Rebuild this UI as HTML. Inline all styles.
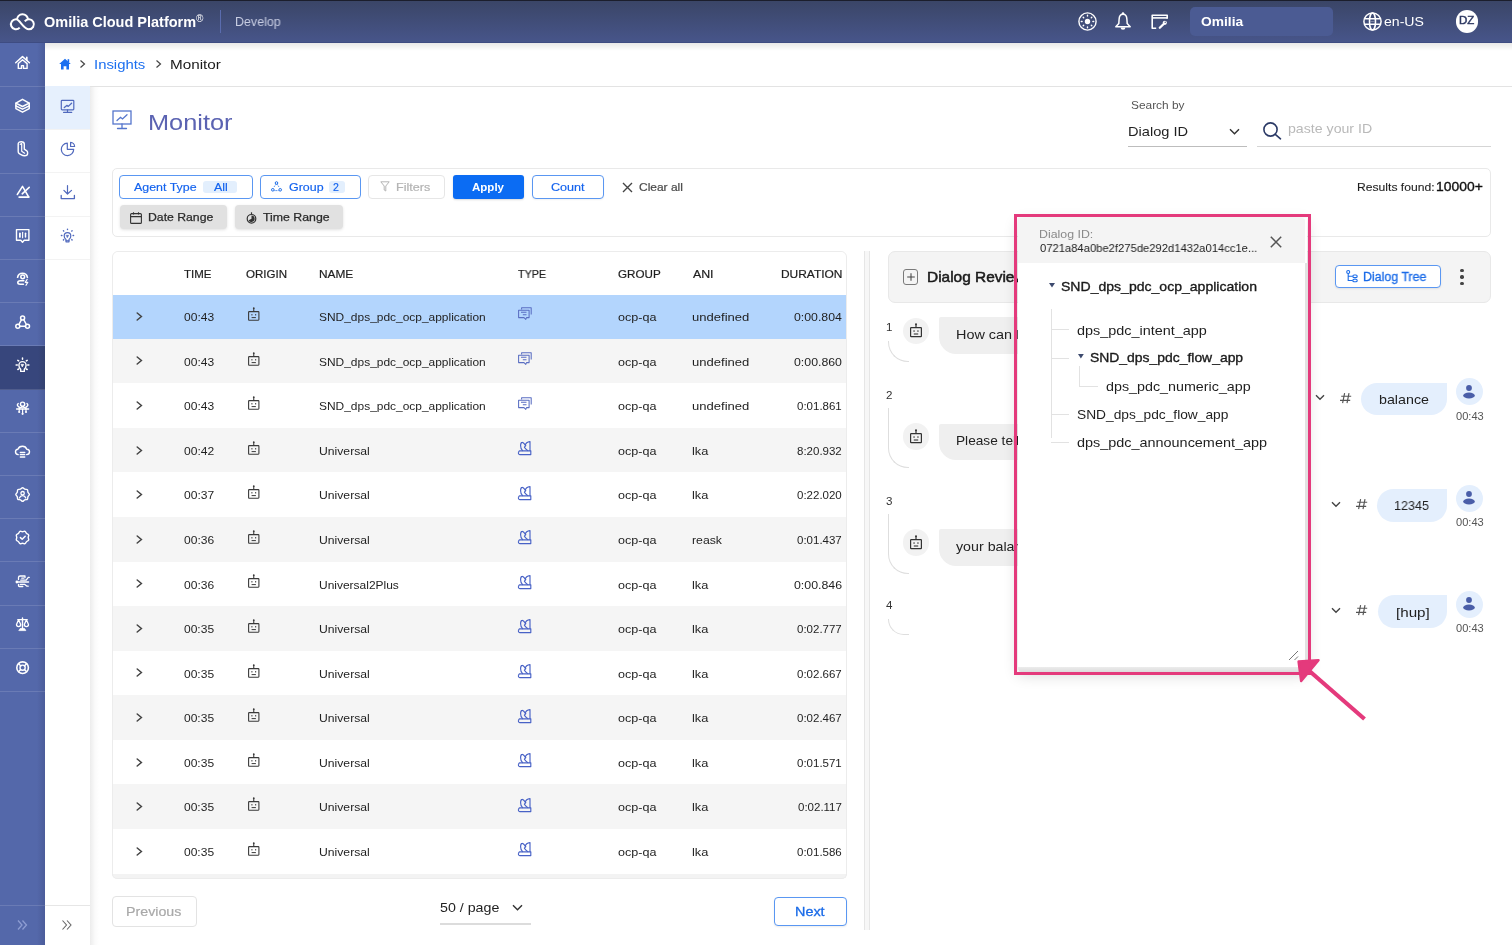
<!DOCTYPE html>
<html><head><meta charset="utf-8">
<style>
*{box-sizing:border-box;margin:0;padding:0}
html,body{width:1512px;height:945px;overflow:hidden;background:#fff;font-family:"Liberation Sans",sans-serif;color:#1f1f1f}
.a{position:absolute}
.t{position:absolute;white-space:nowrap;line-height:1;will-change:transform}
svg{position:absolute;overflow:visible}
</style></head><body>
<div class="a" style="left:0px;top:0px;width:1512px;height:42px;background:linear-gradient(#3a4566,#47558a)"></div>
<div class="a" style="left:0px;top:0px;width:1512px;height:1px;background:#1b1e2c"></div>
<div class="a" style="left:0px;top:42px;width:1512px;height:1px;background:#3e4c82"></div>
<svg style="left:0px;top:0px" width="45" height="42" viewBox="0 0 45 42" ><g fill="none" stroke="#fff" stroke-width="2" stroke-linecap="butt"><path d="M19.7 27.6 A5 5 0 1 1 16.2 19.3 C19.8 19.3 23.5 29.3 28.9 29.3 A5 5 0 1 0 24.8 21.4"/><path d="M17 19.8 A5.5 5.5 0 0 1 28 19.6"/></g></svg>
<span class="t" style="left:44.21px;top:15.01px;font-size:14.4px;font-weight:700;color:#fff;letter-spacing:0.000px;transform:scaleX(1.0064);transform-origin:0 0;">Omilia Cloud Platform</span>
<span class="t" style="left:196.35px;top:13.54px;font-size:10px;font-weight:400;color:#fff;letter-spacing:0.000px;">®</span>
<div class="a" style="left:220px;top:10px;width:1px;height:23px;background:#5a6cae"></div>
<span class="t" style="left:234.68px;top:15.53px;font-size:12.6px;font-weight:400;color:#c9cee3;letter-spacing:0.000px;transform:scaleX(0.9875);transform-origin:0 0;">Develop</span>
<svg style="left:1078px;top:12px" width="19" height="19" viewBox="0 0 19 19" ><g fill="none" stroke="#fff" stroke-width="1.4"><circle cx="9.5" cy="9.5" r="8.6"/></g><circle cx="9.5" cy="9.5" r="2.7" fill="#fff"/><g stroke="#fff" stroke-width="1.4" stroke-linecap="round"><path d="M9.5 3.3V4.1M9.5 14.9V15.7M3.3 9.5H4.1M14.9 9.5H15.7M5.2 5.2L5.7 5.7M13.3 13.3L13.8 13.8M5.2 13.8L5.7 13.3M13.3 5.7L13.8 5.2"/></g></svg>
<svg style="left:1114px;top:11px" width="18" height="21" viewBox="0 0 18 21" ><g fill="none" stroke="#fff" stroke-width="1.5" stroke-linejoin="round"><path d="M9 3.2C6.2 3.2 5.2 5.5 5.1 8.2 L4.8 12.6 L1.8 15.8 H16.2 L13.2 12.6 L12.9 8.2 C12.8 5.5 11.8 3.2 9 3.2Z"/></g><circle cx="9" cy="2.4" r="1.25" fill="#fff"/><path d="M6.6 16.4 A2.4 2.4 0 0 0 11.4 16.4Z" fill="#fff"/></svg>
<svg style="left:1151px;top:14px" width="18" height="16" viewBox="0 0 18 16" ><g fill="none" stroke="#fff" stroke-width="1.6" stroke-linejoin="round"><path d="M5.2 14.2 H1.2 V1.2 H16.2 V4.8"/><path d="M1.2 3.9 H16.2"/></g><g stroke="#fff" stroke-width="2.3" stroke-linecap="round"><path d="M8.8 13.8 L12.4 10.2"/></g><circle cx="13.8" cy="8.8" r="2.1" fill="#fff"/><circle cx="14.2" cy="8.3" r="0.7" fill="#3f4a73"/></svg>
<div class="a" style="left:1190px;top:7px;width:143px;height:29px;background:#4b5b93;border-radius:5px"></div>
<span class="t" style="left:1200.93px;top:15.14px;font-size:13.3px;font-weight:700;color:#fff;letter-spacing:0.000px;transform:scaleX(1.0374);transform-origin:0 0;">Omilia</span>
<svg style="left:1363px;top:12px" width="19" height="19" viewBox="0 0 19 19" ><g fill="none" stroke="#fff" stroke-width="1.5"><circle cx="9.5" cy="9.5" r="8.6"/><ellipse cx="9.5" cy="9.5" rx="3" ry="8.6"/><path d="M1.4 6.8H17.6M1.4 12.2H17.6"/></g><path d="M7.5 9.5H11.5" stroke="#fff" stroke-width="0.6" opacity=".5"/></svg>
<span class="t" style="left:1384.40px;top:15.14px;font-size:13.3px;font-weight:400;color:#fff;letter-spacing:0.000px;transform:scaleX(1.0595);transform-origin:0 0;">en-US</span>
<div class="a" style="left:1455.9px;top:10.4px;width:22.4px;height:22.4px;border-radius:50%;background:#fff"></div>
<span class="t" style="left:1459.06px;top:16.47px;font-size:10.2px;font-weight:400;color:#2f3a63;letter-spacing:0.000px;transform:scaleX(1.1256);transform-origin:0 0;-webkit-text-stroke:0.45px #2f3a63">DZ</span>
<div class="a" style="left:90px;top:43px;width:1422px;height:8px;background:linear-gradient(rgba(0,0,0,.09),rgba(0,0,0,0))"></div>
<div class="a" style="left:45px;top:43px;width:45px;height:8px;background:linear-gradient(rgba(0,0,0,.09),rgba(0,0,0,0))"></div>
<div class="a" style="left:0px;top:43px;width:45px;height:902px;background:linear-gradient(90deg,#5468aa 0,#5468aa 37px,#4b5c9a 45px)"></div>
<div class="a" style="left:0px;top:86.2px;width:45px;height:1px;background:rgba(255,255,255,.13)"></div>
<div class="a" style="left:0px;top:129.4px;width:45px;height:1px;background:rgba(255,255,255,.13)"></div>
<div class="a" style="left:0px;top:172.6px;width:45px;height:1px;background:rgba(255,255,255,.13)"></div>
<div class="a" style="left:0px;top:215.8px;width:45px;height:1px;background:rgba(255,255,255,.13)"></div>
<div class="a" style="left:0px;top:259.0px;width:45px;height:1px;background:rgba(255,255,255,.13)"></div>
<div class="a" style="left:0px;top:302.2px;width:45px;height:1px;background:rgba(255,255,255,.13)"></div>
<div class="a" style="left:0px;top:345.4px;width:45px;height:1px;background:rgba(255,255,255,.13)"></div>
<div class="a" style="left:0px;top:346.4px;width:45px;height:43.2px;background:linear-gradient(90deg,#37467c 0,#37467c 38px,#33416f 45px)"></div>
<div class="a" style="left:0px;top:388.6px;width:45px;height:1px;background:rgba(255,255,255,.13)"></div>
<div class="a" style="left:0px;top:431.8px;width:45px;height:1px;background:rgba(255,255,255,.13)"></div>
<div class="a" style="left:0px;top:475.0px;width:45px;height:1px;background:rgba(255,255,255,.13)"></div>
<div class="a" style="left:0px;top:518.2px;width:45px;height:1px;background:rgba(255,255,255,.13)"></div>
<div class="a" style="left:0px;top:561.4px;width:45px;height:1px;background:rgba(255,255,255,.13)"></div>
<div class="a" style="left:0px;top:604.6px;width:45px;height:1px;background:rgba(255,255,255,.13)"></div>
<div class="a" style="left:0px;top:647.8px;width:45px;height:1px;background:rgba(255,255,255,.13)"></div>
<div class="a" style="left:0px;top:691.0px;width:45px;height:1px;background:rgba(255,255,255,.13)"></div>
<div class="a" style="left:0px;top:905px;width:45px;height:1px;background:rgba(255,255,255,.13)"></div>
<svg style="left:16px;top:919px" width="12" height="12" viewBox="0 0 12 12" ><g fill="none" stroke="#8e9dd3" stroke-width="1.3"><path d="M2 1.5L6 6L2 10.5M6.5 1.5L10.5 6L6.5 10.5"/></g></svg>
<svg style="left:12px;top:54px" width="22" height="22" viewBox="0 0 22 22" ><g fill="none" stroke="#fff" stroke-linecap="round" stroke-linejoin="round"><path d="M3.7 8.8 L10.5 2.6 L17.4 8.8" stroke-width="1.5"/><path d="M14.8 3.4 V5.8" stroke-width="1.7"/><path d="M6.3 9.6 L10.5 5.8 L15.1 9.6 V14.4 H11.5 V11.6 H9.5 V14.4 H6.3 Z" stroke-width="1.4"/></g></svg>
<svg style="left:12px;top:97px" width="22" height="22" viewBox="0 0 22 22" ><g fill="none" stroke="#fff" stroke-linecap="round" stroke-linejoin="round"><g stroke-width="1.5"><path d="M10.5 2.3 L17.2 6.2 L10.5 9.5 L3.9 6.2 Z"/><path d="M3.9 6.2 V8.8 L10.5 12.2 L17.2 8.8 V6.2"/><path d="M3.9 8.8 V11.6 L10.5 15.2 L17.2 11.6 V8.8"/></g></g></svg>
<svg style="left:12px;top:138px" width="22" height="22" viewBox="0 0 22 22" ><g fill="none" stroke="#fff" stroke-linecap="round" stroke-linejoin="round"><path d="M6.2 5.8 C6.2 4.3 7.5 3.8 9.2 3.8 C10.8 3.8 12.3 4.5 12.3 6 V11.2 L14.8 12.8 C15.4 13.2 15.6 13.8 15.6 14.5 V15.6 C15.6 17 14.5 17.8 12.6 17.8 C11.2 17.8 10 17.2 8.5 16.3 L7 15.3 C6.4 14.9 6.2 14.2 6.2 13.4 Z" stroke-width="1.4"/><path d="M8.2 6.3 L9.7 5.6 V13.2 L12.6 15.2" stroke-width="1.2"/></g></svg>
<svg style="left:12px;top:181px" width="22" height="22" viewBox="0 0 22 22" ><g fill="none" stroke="#fff" stroke-linecap="round" stroke-linejoin="round"><path d="M5.3 13.5 L10.5 5.3 L16.7 16" stroke-width="1.5"/><path d="M10.2 12.8 L17.2 6.3" stroke-width="1.6"/><path d="M7.2 16.1 H16.7" stroke-width="1.9"/></g></svg>
<svg style="left:12px;top:224px" width="22" height="22" viewBox="0 0 22 22" ><g fill="none" stroke="#fff" stroke-linecap="round" stroke-linejoin="round"><path d="M4.5 5.6 H16.9 V16.2 H12.2 L10.5 18.3 L8.8 16.2 H4.5 Z" stroke-width="1.4"/><path d="M7.9 9.3 V12.9" stroke-width="1.8"/><path d="M10.6 8.3 V13.8" stroke-width="1.1"/><path d="M13.5 9.3 V12.9" stroke-width="1.5"/></g></svg>
<svg style="left:12px;top:267px" width="22" height="22" viewBox="0 0 22 22" ><g fill="none" stroke="#fff" stroke-linecap="round" stroke-linejoin="round"><path d="M5.6 10.3 A5 5 0 0 1 15.4 10.3" stroke-width="1.6"/><circle cx="10.7" cy="9.8" r="1.9" stroke-width="1.5"/><path d="M11.8 13.8 H8.2 C6.5 13.8 5.8 14.6 5.8 15.6 C5.8 16.6 6.6 17.3 8.2 17.3 H11.4" stroke-width="1.6"/><path d="M15.2 12.3 L13.3 15.3 H15.8 L14 18.3" stroke-width="1.2"/></g></svg>
<svg style="left:12px;top:310px" width="22" height="22" viewBox="0 0 22 22" ><g fill="none" stroke="#fff" stroke-linecap="round" stroke-linejoin="round"><g stroke-width="1.5"><circle cx="10.6" cy="7.9" r="2"/><circle cx="5.8" cy="16.3" r="2"/><circle cx="15.5" cy="16.3" r="2"/><path d="M9.5 9.6 L6.9 14.5 M11.7 9.6 L14.4 14.5 M7.8 16.3 H13.5"/></g></g></svg>
<svg style="left:12px;top:354px" width="22" height="22" viewBox="0 0 22 22" ><g fill="none" stroke="#fff" stroke-linecap="round" stroke-linejoin="round"><path d="M8.7 15.2 C7.5 14.2 6.9 12.8 6.9 11.2 A3.6 3.6 0 0 1 14.1 11.2 C14.1 12.8 13.5 14.2 12.3 15.2 V17.4 H8.7 Z" stroke-width="1.4"/><path d="M9.4 10.4 H11.6 L10.5 12.6 Z" fill="#fff" stroke-width="0.8"/><path d="M10.5 3.9 V5.3 M4.1 11 H5.3 M15.7 11 H16.9 M5.8 6.3 L6.7 6.9 M15.2 6.3 L14.3 6.9 M5.8 15.5 L6.7 15 M15.2 15.5 L14.3 15" stroke-width="1.5"/></g></svg>
<svg style="left:12px;top:397px" width="22" height="22" viewBox="0 0 22 22" ><g fill="none" stroke="#fff" stroke-linecap="round" stroke-linejoin="round"><g stroke-width="1.4"><circle cx="10.6" cy="7.2" r="2.1"/><path d="M7.2 11.8 C7.8 10.6 9 10.1 10.6 10.1 C12.2 10.1 13.4 10.6 14 11.8"/><path d="M6.2 6.6 C5 7.3 5.2 8.8 6.2 9.4 L7.4 10.4 M15 6.6 C16.2 7.3 16 8.8 15 9.4 L13.8 10.4"/><path d="M4.6 12 H16.6"/><path d="M7.2 12 V14.2 M10.6 12 V16 M14 12 V14.2" stroke-width="1.2"/></g><circle cx="7.2" cy="15" r="1.1" fill="#fff" stroke="none"/><circle cx="10.6" cy="16.8" r="1.1" fill="#fff" stroke="none"/><circle cx="14" cy="15" r="1.1" fill="#fff" stroke="none"/></g></svg>
<svg style="left:12px;top:440px" width="22" height="22" viewBox="0 0 22 22" ><g fill="none" stroke="#fff" stroke-linecap="round" stroke-linejoin="round"><path d="M6.2 14.6 C4.3 14.4 3.5 13.2 3.5 11.8 C3.5 10.3 4.6 9.3 5.9 9.2 C6.6 7.2 8.4 6.2 10.5 6.2 C12.6 6.2 14.2 7.4 14.8 9.2 C16.4 9.3 17.5 10.4 17.5 11.8 C17.5 13.3 16.4 14.6 14.6 14.6" stroke-width="1.4"/><path d="M8.3 12.5 H12.8 M8.3 14.7 H12.8 M8.3 17 H12.8" stroke-width="1.3"/></g></svg>
<svg style="left:12px;top:483px" width="22" height="22" viewBox="0 0 22 22" ><g fill="none" stroke="#fff" stroke-linecap="round" stroke-linejoin="round"><path d="M9.57 5.31 Q10.60 4.10 11.63 5.31 Q12.67 6.51 14.25 6.39 Q15.83 6.27 15.71 7.85 Q15.59 9.43 16.79 10.47 Q18.00 11.50 16.79 12.53 Q15.59 13.57 15.71 15.15 Q15.83 16.73 14.25 16.61 Q12.67 16.49 11.63 17.69 Q10.60 18.90 9.57 17.69 Q8.53 16.49 6.95 16.61 Q5.37 16.73 5.49 15.15 Q5.61 13.57 4.41 12.53 Q3.20 11.50 4.41 10.47 Q5.61 9.43 5.49 7.85 Q5.37 6.27 6.95 6.39 Q8.53 6.51 9.57 5.31 Z" stroke-width="1.4"/><circle cx="10.6" cy="10.2" r="1.7" stroke-width="1.3"/><path d="M7.4 15 C8 13.4 9.2 12.7 10.6 12.7 C12 12.7 13.2 13.4 13.8 15" stroke-width="1.3"/></g></svg>
<svg style="left:12px;top:526px" width="22" height="22" viewBox="0 0 22 22" ><g fill="none" stroke="#fff" stroke-linecap="round" stroke-linejoin="round"><path d="M11.88 5.47 Q13.26 4.85 13.79 6.26 Q14.32 7.68 15.74 8.21 Q17.15 8.74 16.53 10.12 Q15.90 11.50 16.53 12.88 Q17.15 14.26 15.74 14.79 Q14.32 15.32 13.79 16.74 Q13.26 18.15 11.88 17.53 Q10.50 16.90 9.12 17.53 Q7.74 18.15 7.21 16.74 Q6.68 15.32 5.26 14.79 Q3.85 14.26 4.47 12.88 Q5.10 11.50 4.47 10.12 Q3.85 8.74 5.26 8.21 Q6.68 7.68 7.21 6.26 Q7.74 4.85 9.12 5.47 Q10.50 6.10 11.88 5.47 Z" stroke-width="1.4"/><path d="M8.4 11.6 L10.2 13.2 L13.2 10.3" stroke-width="1.5"/></g></svg>
<svg style="left:12px;top:569px" width="22" height="22" viewBox="0 0 22 22" ><g fill="none" stroke="#fff" stroke-linecap="round" stroke-linejoin="round"><circle cx="4.9" cy="13" r="1.4" fill="#fff" stroke="none"/><path d="M4.9 13 H16.6" stroke-width="1.3"/><path d="M6.5 10.6 V8.4 C6.5 7.5 7.3 7 8.2 7 H13 V8.6 M8.8 11.2 H14.2 L16.3 8.4 H17.2 M9.8 9.2 H11.8" stroke-width="1.3"/><path d="M6.5 15.5 V16.8 C6.5 17.3 7 17.5 7.5 17.5 H10.8 M8.2 15.3 H12.5 L15 17.2 H16.2" stroke-width="1.3"/></g></svg>
<svg style="left:12px;top:612px" width="22" height="22" viewBox="0 0 22 22" ><g fill="none" stroke="#fff" stroke-linecap="round" stroke-linejoin="round"><path d="M10.5 6 V16.5 M5.8 7.6 H15.2" stroke-width="1.4"/><path d="M7.2 18.6 H13.8 L12.6 16.6 H8.4 Z" fill="#fff" stroke-width="0.8"/><path d="M6.6 7.8 L4.5 12.6 C4.5 14 5.4 14.7 6.6 14.7 C7.8 14.7 8.7 14 8.7 12.6 Z M14.4 7.8 L12.3 12.6 C12.3 14 13.2 14.7 14.4 14.7 C15.6 14.7 16.5 14 16.5 12.6 Z" stroke-width="1.3"/></g></svg>
<svg style="left:12px;top:655px" width="22" height="22" viewBox="0 0 22 22" ><g fill="none" stroke="#fff" stroke-linecap="round" stroke-linejoin="round"><circle cx="10.6" cy="12.7" r="5.8" stroke-width="1.6"/><circle cx="10.6" cy="12.7" r="2.6" stroke-width="1.4"/><path d="M6.5 8.6 L8.8 10.9 M14.7 8.6 L12.4 10.9 M6.5 16.8 L8.8 14.5 M14.7 16.8 L12.4 14.5" stroke-width="1.4"/></g></svg>
<div class="a" style="left:90px;top:86px;width:9px;height:859px;background:linear-gradient(90deg,rgba(0,0,0,.075),rgba(0,0,0,.02) 5px,rgba(0,0,0,0))"></div>
<div class="a" style="left:45px;top:86px;width:45px;height:43.4px;background:#e6f0fd"></div>
<div class="a" style="left:45px;top:129.2px;width:45px;height:1px;background:#f3f3f3"></div>
<div class="a" style="left:45px;top:172.4px;width:45px;height:1px;background:#f3f3f3"></div>
<div class="a" style="left:45px;top:215.6px;width:45px;height:1px;background:#f3f3f3"></div>
<div class="a" style="left:45px;top:258.8px;width:45px;height:1px;background:#f3f3f3"></div>
<div class="a" style="left:45px;top:905px;width:45px;height:1px;background:#e6e6e6"></div>
<svg style="left:61px;top:919px" width="12" height="12" viewBox="0 0 12 12" ><g fill="none" stroke="#666" stroke-width="1.1"><path d="M1.5 1.5L5.5 6L1.5 10.5M6 1.5L10 6L6 10.5"/></g></svg>
<svg style="left:56px;top:96px" width="24" height="24" viewBox="0 0 24 24" ><g fill="none" stroke="#5069bd" stroke-linecap="round" stroke-linejoin="round"><rect x="5.3" y="4.3" width="12.5" height="9.5" rx="0.8" stroke-width="1.2"/><path d="M11.5 13.8 V16.3 M7.6 16.4 H15.7" stroke-width="1.2"/><path d="M8.3 11.5 L10.8 9.4 L12.3 10.4 L15.6 7.3" stroke-width="1.3"/></g></svg>
<svg style="left:56px;top:138px" width="24" height="24" viewBox="0 0 24 24" ><g fill="none" stroke="#5069bd" stroke-linecap="round" stroke-linejoin="round"><path d="M11.3 5.2 A6.2 6.2 0 1 0 17.7 11.3 H11.3 Z" stroke-width="1.2"/><path d="M14.6 4.3 V8.5 H18.6 A4.2 4.2 0 0 0 14.6 4.3 Z" stroke-width="1.2"/></g></svg>
<svg style="left:56px;top:180px" width="24" height="24" viewBox="0 0 24 24" ><g fill="none" stroke="#5069bd" stroke-linecap="round" stroke-linejoin="round"><path d="M11.5 5.6 V14 M7.9 10.4 L11.5 14 L15.5 10.4" stroke-width="1.2"/><path d="M5.2 15.4 V18.6 H18.4 V15.4" stroke-width="1.3"/></g></svg>
<svg style="left:56px;top:223px" width="24" height="24" viewBox="0 0 24 24" ><g fill="none" stroke="#5069bd" stroke-linecap="round" stroke-linejoin="round"><path d="M10 16.6 C8.9 15.8 8.2 14.6 8.2 12.9 A3.3 3.3 0 0 1 14.8 12.9 C14.8 14.6 14.1 15.8 13 16.6 V18.8 H10 Z" stroke-width="1.2"/><path d="M10.4 12.3 H12.6 L11.5 14.4 Z" fill="#5069bd" stroke-width="0.6"/><path d="M10 17.6 H13" stroke-width="0.9"/><path d="M11.5 6.1 V6.6 M5.4 12.5 H5.9 M17.1 12.5 H17.6 M7.4 7.7 L7.7 8.1 M16.1 7.7 L15.8 8.1 M7.4 17 L7.7 16.6 M16.1 17 L15.8 16.6" stroke-width="1.4"/></g></svg>
<div class="a" style="left:90px;top:86px;width:1422px;height:1px;background:#e3e3e3"></div>
<svg style="left:59px;top:58px" width="12" height="12" viewBox="0 0 12 12" ><path d="M6 0.8 L11.8 6 H10 V11.5 H7.4 V8.2 H4.6 V11.5 H2 V6 H0.2 Z" fill="#1a6ff0"/><rect x="8.6" y="1.2" width="1.6" height="3" fill="#1a6ff0"/></svg>
<svg style="left:79px;top:59px" width="8" height="10" viewBox="0 0 8 10" ><path d="M1.5 1.5 L5.5 5 L1.5 8.5" fill="none" stroke="#444" stroke-width="1.2"/></svg>
<span class="t" style="left:94.43px;top:58.07px;font-size:13.5px;font-weight:400;color:#1b6ff0;letter-spacing:0.000px;transform:scaleX(1.1027);transform-origin:0 0;">Insights</span>
<svg style="left:155px;top:59px" width="8" height="10" viewBox="0 0 8 10" ><path d="M1.5 1.5 L5.5 5 L1.5 8.5" fill="none" stroke="#444" stroke-width="1.2"/></svg>
<span class="t" style="left:170.15px;top:58.07px;font-size:13.5px;font-weight:400;color:#1a1a1a;letter-spacing:0.000px;transform:scaleX(1.1308);transform-origin:0 0;">Monitor</span>
<svg style="left:112px;top:110px" width="20" height="20" viewBox="0 0 20 20" ><g fill="none" stroke="#5576cc" stroke-width="1.3" stroke-linecap="round"><rect x="1" y="1" width="18" height="13"/><path d="M10 14V17.5M5.5 18.5H14.5"/><path d="M5 10.5L8.5 7.3L10.5 9L15 4.8"/></g></svg>
<span class="t" style="left:147.62px;top:111.81px;font-size:22.2px;font-weight:400;color:#5b63b2;letter-spacing:0.000px;transform:scaleX(1.1421);transform-origin:0 0;">Monitor</span>
<span class="t" style="left:1131.46px;top:100.03px;font-size:11.3px;font-weight:400;color:#555;letter-spacing:0.000px;transform:scaleX(1.0528);transform-origin:0 0;">Search by</span>
<span class="t" style="left:1127.80px;top:124.60px;font-size:13px;font-weight:400;color:#1f1f1f;letter-spacing:0.000px;transform:scaleX(1.1240);transform-origin:0 0;">Dialog ID</span>
<svg style="left:1229px;top:128px" width="12" height="8" viewBox="0 0 12 8" ><path d="M1 1.2 L5.5 5.8 L10 1.2" fill="none" stroke="#333" stroke-width="1.4"/></svg>
<div class="a" style="left:1128px;top:146px;width:119px;height:1px;background:#bdbdbd"></div>
<svg style="left:1263px;top:122px" width="19" height="18" viewBox="0 0 19 18" ><g fill="none" stroke="#2b3a66" stroke-width="1.6"><circle cx="7.5" cy="7.5" r="6.6"/><path d="M12.3 12.3 L17.5 16.8" stroke-linecap="round"/></g></svg>
<span class="t" style="left:1288.49px;top:122.00px;font-size:13px;font-weight:400;color:#b9b9b9;letter-spacing:0.000px;transform:scaleX(1.0887);transform-origin:0 0;">paste your ID</span>
<div class="a" style="left:1257px;top:146px;width:234px;height:1px;background:#d5d5d5"></div>
<div class="a" style="left:111.5px;top:167.5px;width:1379px;height:69px;border:1px solid #e9e9e9;border-radius:5px;background:#fff"></div>
<div class="a" style="left:119px;top:175px;width:134px;height:24px;border:1px solid #5a97f2;border-radius:4px;background:#fff"></div>
<span class="t" style="left:134.48px;top:182.03px;font-size:10.6px;font-weight:400;color:#1463ee;letter-spacing:0.000px;transform:scaleX(1.1717);transform-origin:0 0;-webkit-text-stroke:0.15px #1463ee">Agent Type</span>
<div class="a" style="left:202.5px;top:180.5px;width:34.5px;height:12.5px;background:#e3effd;border-radius:3px"></div>
<span class="t" style="left:213.68px;top:182.03px;font-size:10.6px;font-weight:400;color:#1463ee;letter-spacing:0.000px;transform:scaleX(1.1673);transform-origin:0 0;-webkit-text-stroke:0.15px #1463ee">All</span>
<div class="a" style="left:260px;top:175px;width:101px;height:24px;border:1px solid #5a97f2;border-radius:4px;background:#fff"></div>
<svg style="left:270.5px;top:181px" width="11" height="11" viewBox="0 0 11 11" ><g fill="none" stroke="#1a6be8" stroke-width="1"><circle cx="5.5" cy="2" r="1.3"/><circle cx="1.8" cy="8.8" r="1.3"/><circle cx="9.2" cy="8.8" r="1.3"/><path d="M4.8 3.4 L3 6 M6.2 3.4 L8 6 M3.5 9.6 H7.5" stroke-dasharray="1 0.8"/></g></svg>
<span class="t" style="left:288.77px;top:182.03px;font-size:10.6px;font-weight:400;color:#1463ee;letter-spacing:0.000px;transform:scaleX(1.1730);transform-origin:0 0;-webkit-text-stroke:0.15px #1463ee">Group</span>
<div class="a" style="left:328.6px;top:180.5px;width:16.6px;height:12.5px;background:#e3effd;border-radius:3px"></div>
<span class="t" style="left:333.47px;top:182.03px;font-size:10.6px;font-weight:400;color:#1463ee;letter-spacing:0.000px;-webkit-text-stroke:0.15px #1463ee">2</span>
<div class="a" style="left:367.7px;top:175px;width:77.5px;height:24px;border:1px solid #e6e6e6;border-radius:4px;background:#fff"></div>
<svg style="left:380px;top:181px" width="10" height="11" viewBox="0 0 10 11" ><path d="M0.8 0.8 H9.2 L5.8 5 V10 L4.2 9 V5 Z" fill="none" stroke="#b5b5b5" stroke-width="1" stroke-linejoin="round"/></svg>
<span class="t" style="left:396.37px;top:182.03px;font-size:10.6px;font-weight:400;color:#b3b3b3;letter-spacing:0.000px;transform:scaleX(1.1888);transform-origin:0 0;-webkit-text-stroke:0.2px #b3b3b3">Filters</span>
<div class="a" style="left:452.7px;top:175.2px;width:71.7px;height:23.4px;background:#0b6cf3;border-radius:3px;box-shadow:0 1px 2px rgba(0,0,0,.15)"></div>
<span class="t" style="left:472.31px;top:182.03px;font-size:10.6px;font-weight:700;color:#fff;letter-spacing:0.000px;transform:scaleX(1.0887);transform-origin:0 0;">Apply</span>
<div class="a" style="left:532px;top:175px;width:72px;height:24px;border:1px solid #5a97f2;border-radius:4px;background:#fff;box-shadow:0 1px 2px rgba(0,0,0,.06)"></div>
<span class="t" style="left:550.66px;top:182.03px;font-size:10.6px;font-weight:400;color:#1463ee;letter-spacing:0.000px;transform:scaleX(1.1892);transform-origin:0 0;-webkit-text-stroke:0.15px #1463ee">Count</span>
<svg style="left:621.5px;top:181.5px" width="11" height="11" viewBox="0 0 11 11" ><path d="M1 1 L10 10 M10 1 L1 10" stroke="#444" stroke-width="1.4"/></svg>
<span class="t" style="left:639.39px;top:182.03px;font-size:10.6px;font-weight:400;color:#4a4a4a;letter-spacing:0.000px;transform:scaleX(1.1300);transform-origin:0 0;-webkit-text-stroke:0.2px #4a4a4a">Clear all</span>
<div class="a" style="left:119.7px;top:205.4px;width:107.5px;height:23.4px;background:#e1e1e1;border-radius:4px;box-shadow:0 1px 3px rgba(0,0,0,.12)"></div>
<svg style="left:129.8px;top:211.7px" width="12" height="12" viewBox="0 0 12 12" ><g fill="none" stroke="#333" stroke-width="1.1"><rect x="0.6" y="1.6" width="10.8" height="9.8" rx="1"/><path d="M0.6 4.6H11.4M3.5 0.2V2.6M8.5 0.2V2.6"/></g></svg>
<span class="t" style="left:147.90px;top:211.92px;font-size:11.2px;font-weight:400;color:#2a2a2a;letter-spacing:0.000px;transform:scaleX(1.0926);transform-origin:0 0;-webkit-text-stroke:0.25px #2a2a2a">Date Range</span>
<div class="a" style="left:234.7px;top:205.4px;width:108.5px;height:23.4px;background:#e1e1e1;border-radius:4px;box-shadow:0 1px 3px rgba(0,0,0,.12)"></div>
<svg style="left:245.6px;top:211.6px" width="11" height="12" viewBox="0 0 11 12" ><g fill="none" stroke="#333" stroke-width="1.2"><circle cx="5.5" cy="6.8" r="4.3"/><path d="M5.5 0.3 V2.3"/></g><path d="M5.5 6.8 V3.6 A3.2 3.2 0 1 1 2.6 8.2 Z" fill="#333"/></svg>
<span class="t" style="left:263.12px;top:211.92px;font-size:11.2px;font-weight:400;color:#2a2a2a;letter-spacing:0.000px;transform:scaleX(1.1007);transform-origin:0 0;-webkit-text-stroke:0.25px #2a2a2a">Time Range</span>
<span class="t" style="left:1356.50px;top:181.89px;font-size:11px;font-weight:400;color:#1f1f1f;letter-spacing:0.000px;transform:scaleX(1.1035);transform-origin:0 0;-webkit-text-stroke:0.1px #1f1f1f">Results found:</span>
<span class="t" style="left:1436.24px;top:180.33px;font-size:13.2px;font-weight:400;color:#111;letter-spacing:0.000px;transform:scaleX(1.0534);transform-origin:0 0;-webkit-text-stroke:0.35px #111">10000+</span>
<div class="a" style="left:111.5px;top:251px;width:735px;height:628px;border:1px solid #ececec;border-radius:6px;background:#f4f4f4;overflow:hidden"></div>
<div class="a" style="left:112.5px;top:252px;width:733px;height:43.3px;background:#fff;border-radius:5px 5px 0 0"></div>
<span class="t" style="left:184.04px;top:268.93px;font-size:11.3px;font-weight:400;color:#1f1f1f;letter-spacing:0.000px;transform:scaleX(1.0167);transform-origin:0 0;-webkit-text-stroke:0.2px #1f1f1f">TIME</span>
<span class="t" style="left:246.25px;top:268.93px;font-size:11.3px;font-weight:400;color:#1f1f1f;letter-spacing:0.000px;transform:scaleX(1.0229);transform-origin:0 0;-webkit-text-stroke:0.2px #1f1f1f">ORIGIN</span>
<span class="t" style="left:319.13px;top:268.93px;font-size:11.3px;font-weight:400;color:#1f1f1f;letter-spacing:0.000px;transform:scaleX(1.0503);transform-origin:0 0;-webkit-text-stroke:0.2px #1f1f1f">NAME</span>
<span class="t" style="left:518.06px;top:268.93px;font-size:11.3px;font-weight:400;color:#1f1f1f;letter-spacing:0.000px;transform:scaleX(0.9487);transform-origin:0 0;-webkit-text-stroke:0.2px #1f1f1f">TYPE</span>
<span class="t" style="left:617.91px;top:268.93px;font-size:11.3px;font-weight:400;color:#1f1f1f;letter-spacing:0.000px;transform:scaleX(1.0305);transform-origin:0 0;-webkit-text-stroke:0.2px #1f1f1f">GROUP</span>
<span class="t" style="left:692.58px;top:268.93px;font-size:11.3px;font-weight:400;color:#1f1f1f;letter-spacing:0.000px;transform:scaleX(1.0912);transform-origin:0 0;-webkit-text-stroke:0.2px #1f1f1f">ANI</span>
<span class="t" style="left:780.52px;top:268.93px;font-size:11.3px;font-weight:400;color:#1f1f1f;letter-spacing:0.000px;transform:scaleX(1.0567);transform-origin:0 0;-webkit-text-stroke:0.2px #1f1f1f">DURATION</span>
<div class="a" style="left:112.5px;top:295.3px;width:733px;height:43.87px;background:#b3d5fd"></div>
<svg style="left:136.3px;top:311.8px" width="7" height="10" viewBox="0 0 7 10" ><path d="M1.2 1 L5.4 4.5 L1.2 8" fill="none" stroke="#444" stroke-width="1.5" stroke-linecap="round"/></svg>
<span class="t" style="left:183.83px;top:312.17px;font-size:11.5px;font-weight:400;color:#1f1f1f;letter-spacing:0.000px;transform:scaleX(1.0458);transform-origin:0 0;">00:43</span>
<svg style="left:247.6px;top:307.0px" width="12" height="14" viewBox="0 0 12 14" ><g fill="none" stroke="#3a3a3a" stroke-width="1.1"><rect x="0.6" y="4.6" width="10.3" height="8.6" rx="0.6"/><path d="M5.75 4.6V1.2"/></g><circle cx="5.75" cy="1.2" r="0.9" fill="#3a3a3a"/><rect x="3.3" y="7.2" width="1.2" height="1.2" fill="#3a3a3a"/><rect x="7" y="7.2" width="1.2" height="1.2" fill="#3a3a3a"/><path d="M3.6 10.6H7.9" stroke="#3a3a3a" stroke-width="1"/></svg>
<span class="t" style="left:319.26px;top:312.17px;font-size:11.5px;font-weight:400;color:#1f1f1f;letter-spacing:0.000px;transform:scaleX(1.0388);transform-origin:0 0;">SND_dps_pdc_ocp_application</span>
<svg style="left:518.3px;top:307.4px" width="14" height="13" viewBox="0 0 14 13" ><g fill="none" stroke="#5a6ec2" stroke-width="1.05" stroke-linejoin="round"><path d="M3.6 2.6 V0.8 H13.2 V7.6"/><path d="M0.6 3.2 H11.1 V10.6 H8.5 L7.8 12.4 L6 10.6 H0.6 Z"/></g><path d="M3 5.3H8.5M4.8 7.8H8.5" stroke="#5a6ec2" stroke-width="1.1"/></svg>
<span class="t" style="left:617.97px;top:312.17px;font-size:11.5px;font-weight:400;color:#1f1f1f;letter-spacing:0.000px;transform:scaleX(1.0926);transform-origin:0 0;">ocp-qa</span>
<span class="t" style="left:691.75px;top:312.17px;font-size:11.5px;font-weight:400;color:#1f1f1f;letter-spacing:0.000px;transform:scaleX(1.1337);transform-origin:0 0;">undefined</span>
<span class="t" style="left:793.52px;top:312.17px;font-size:11.5px;font-weight:400;color:#1f1f1f;letter-spacing:0.000px;transform:scaleX(1.0687);transform-origin:0 0;">0:00.804</span>
<div class="a" style="left:112.5px;top:338.77px;width:733px;height:44.97px;background:#f5f5f5"></div>
<svg style="left:136.3px;top:356.37px" width="7" height="10" viewBox="0 0 7 10" ><path d="M1.2 1 L5.4 4.5 L1.2 8" fill="none" stroke="#444" stroke-width="1.5" stroke-linecap="round"/></svg>
<span class="t" style="left:183.83px;top:356.74px;font-size:11.5px;font-weight:400;color:#1f1f1f;letter-spacing:0.000px;transform:scaleX(1.0458);transform-origin:0 0;">00:43</span>
<svg style="left:247.6px;top:351.57px" width="12" height="14" viewBox="0 0 12 14" ><g fill="none" stroke="#3a3a3a" stroke-width="1.1"><rect x="0.6" y="4.6" width="10.3" height="8.6" rx="0.6"/><path d="M5.75 4.6V1.2"/></g><circle cx="5.75" cy="1.2" r="0.9" fill="#3a3a3a"/><rect x="3.3" y="7.2" width="1.2" height="1.2" fill="#3a3a3a"/><rect x="7" y="7.2" width="1.2" height="1.2" fill="#3a3a3a"/><path d="M3.6 10.6H7.9" stroke="#3a3a3a" stroke-width="1"/></svg>
<span class="t" style="left:319.26px;top:356.74px;font-size:11.5px;font-weight:400;color:#1f1f1f;letter-spacing:0.000px;transform:scaleX(1.0388);transform-origin:0 0;">SND_dps_pdc_ocp_application</span>
<svg style="left:518.3px;top:351.97px" width="14" height="13" viewBox="0 0 14 13" ><g fill="none" stroke="#5a6ec2" stroke-width="1.05" stroke-linejoin="round"><path d="M3.6 2.6 V0.8 H13.2 V7.6"/><path d="M0.6 3.2 H11.1 V10.6 H8.5 L7.8 12.4 L6 10.6 H0.6 Z"/></g><path d="M3 5.3H8.5M4.8 7.8H8.5" stroke="#5a6ec2" stroke-width="1.1"/></svg>
<span class="t" style="left:617.97px;top:356.74px;font-size:11.5px;font-weight:400;color:#1f1f1f;letter-spacing:0.000px;transform:scaleX(1.0926);transform-origin:0 0;">ocp-qa</span>
<span class="t" style="left:691.75px;top:356.74px;font-size:11.5px;font-weight:400;color:#1f1f1f;letter-spacing:0.000px;transform:scaleX(1.1337);transform-origin:0 0;">undefined</span>
<span class="t" style="left:793.52px;top:356.74px;font-size:11.5px;font-weight:400;color:#1f1f1f;letter-spacing:0.000px;transform:scaleX(1.0714);transform-origin:0 0;">0:00.860</span>
<div class="a" style="left:112.5px;top:383.34px;width:733px;height:44.97px;background:#fff"></div>
<svg style="left:136.3px;top:400.94px" width="7" height="10" viewBox="0 0 7 10" ><path d="M1.2 1 L5.4 4.5 L1.2 8" fill="none" stroke="#444" stroke-width="1.5" stroke-linecap="round"/></svg>
<span class="t" style="left:183.83px;top:401.31px;font-size:11.5px;font-weight:400;color:#1f1f1f;letter-spacing:0.000px;transform:scaleX(1.0458);transform-origin:0 0;">00:43</span>
<svg style="left:247.6px;top:396.14px" width="12" height="14" viewBox="0 0 12 14" ><g fill="none" stroke="#3a3a3a" stroke-width="1.1"><rect x="0.6" y="4.6" width="10.3" height="8.6" rx="0.6"/><path d="M5.75 4.6V1.2"/></g><circle cx="5.75" cy="1.2" r="0.9" fill="#3a3a3a"/><rect x="3.3" y="7.2" width="1.2" height="1.2" fill="#3a3a3a"/><rect x="7" y="7.2" width="1.2" height="1.2" fill="#3a3a3a"/><path d="M3.6 10.6H7.9" stroke="#3a3a3a" stroke-width="1"/></svg>
<span class="t" style="left:319.26px;top:401.31px;font-size:11.5px;font-weight:400;color:#1f1f1f;letter-spacing:0.000px;transform:scaleX(1.0388);transform-origin:0 0;">SND_dps_pdc_ocp_application</span>
<svg style="left:518.3px;top:396.54px" width="14" height="13" viewBox="0 0 14 13" ><g fill="none" stroke="#5a6ec2" stroke-width="1.05" stroke-linejoin="round"><path d="M3.6 2.6 V0.8 H13.2 V7.6"/><path d="M0.6 3.2 H11.1 V10.6 H8.5 L7.8 12.4 L6 10.6 H0.6 Z"/></g><path d="M3 5.3H8.5M4.8 7.8H8.5" stroke="#5a6ec2" stroke-width="1.1"/></svg>
<span class="t" style="left:617.97px;top:401.31px;font-size:11.5px;font-weight:400;color:#1f1f1f;letter-spacing:0.000px;transform:scaleX(1.0926);transform-origin:0 0;">ocp-qa</span>
<span class="t" style="left:691.75px;top:401.31px;font-size:11.5px;font-weight:400;color:#1f1f1f;letter-spacing:0.000px;transform:scaleX(1.1337);transform-origin:0 0;">undefined</span>
<span class="t" style="left:796.80px;top:401.31px;font-size:11.5px;font-weight:400;color:#1f1f1f;letter-spacing:0.000px;">0:01.861</span>
<div class="a" style="left:112.5px;top:427.91px;width:733px;height:44.97px;background:#f5f5f5"></div>
<svg style="left:136.3px;top:445.51px" width="7" height="10" viewBox="0 0 7 10" ><path d="M1.2 1 L5.4 4.5 L1.2 8" fill="none" stroke="#444" stroke-width="1.5" stroke-linecap="round"/></svg>
<span class="t" style="left:183.83px;top:445.88px;font-size:11.5px;font-weight:400;color:#1f1f1f;letter-spacing:0.000px;transform:scaleX(1.0485);transform-origin:0 0;">00:42</span>
<svg style="left:247.6px;top:440.71px" width="12" height="14" viewBox="0 0 12 14" ><g fill="none" stroke="#3a3a3a" stroke-width="1.1"><rect x="0.6" y="4.6" width="10.3" height="8.6" rx="0.6"/><path d="M5.75 4.6V1.2"/></g><circle cx="5.75" cy="1.2" r="0.9" fill="#3a3a3a"/><rect x="3.3" y="7.2" width="1.2" height="1.2" fill="#3a3a3a"/><rect x="7" y="7.2" width="1.2" height="1.2" fill="#3a3a3a"/><path d="M3.6 10.6H7.9" stroke="#3a3a3a" stroke-width="1"/></svg>
<span class="t" style="left:318.86px;top:445.88px;font-size:11.5px;font-weight:400;color:#1f1f1f;letter-spacing:0.000px;transform:scaleX(1.0587);transform-origin:0 0;">Universal</span>
<svg style="left:518.3px;top:441.11px" width="14" height="14" viewBox="0 0 14 14" ><g fill="none" stroke="#4862c6" stroke-width="1.15" stroke-linejoin="round" stroke-linecap="round"><path d="M1.5 9.8 H12.8 V13.6 H1.8 C0.4 13.6 0.2 11.8 0.6 11.2 C1 10.5 1.2 9.8 1.5 9.8Z"/><path d="M4.6 9.6 C3 8.4 2.6 6.5 2.6 4.8 C2.6 3.5 3.2 1.5 4.2 1.4 C5 1.3 7 3.6 7.8 4.6 L6.4 6.2 C7.2 7.6 8.2 8.4 9.8 9.6"/><path d="M7.2 4.2 C7.6 2.4 9.5 0.8 12 0.6 V9.6"/></g></svg>
<span class="t" style="left:617.97px;top:445.88px;font-size:11.5px;font-weight:400;color:#1f1f1f;letter-spacing:0.000px;transform:scaleX(1.0926);transform-origin:0 0;">ocp-qa</span>
<span class="t" style="left:691.74px;top:445.88px;font-size:11.5px;font-weight:400;color:#1f1f1f;letter-spacing:0.000px;transform:scaleX(1.1128);transform-origin:0 0;">lka</span>
<span class="t" style="left:796.81px;top:445.88px;font-size:11.5px;font-weight:400;color:#1f1f1f;letter-spacing:0.000px;">8:20.932</span>
<div class="a" style="left:112.5px;top:472.48px;width:733px;height:44.97px;background:#fff"></div>
<svg style="left:136.3px;top:490.08px" width="7" height="10" viewBox="0 0 7 10" ><path d="M1.2 1 L5.4 4.5 L1.2 8" fill="none" stroke="#444" stroke-width="1.5" stroke-linecap="round"/></svg>
<span class="t" style="left:183.83px;top:490.45px;font-size:11.5px;font-weight:400;color:#1f1f1f;letter-spacing:0.000px;transform:scaleX(1.0485);transform-origin:0 0;">00:37</span>
<svg style="left:247.6px;top:485.28px" width="12" height="14" viewBox="0 0 12 14" ><g fill="none" stroke="#3a3a3a" stroke-width="1.1"><rect x="0.6" y="4.6" width="10.3" height="8.6" rx="0.6"/><path d="M5.75 4.6V1.2"/></g><circle cx="5.75" cy="1.2" r="0.9" fill="#3a3a3a"/><rect x="3.3" y="7.2" width="1.2" height="1.2" fill="#3a3a3a"/><rect x="7" y="7.2" width="1.2" height="1.2" fill="#3a3a3a"/><path d="M3.6 10.6H7.9" stroke="#3a3a3a" stroke-width="1"/></svg>
<span class="t" style="left:318.86px;top:490.45px;font-size:11.5px;font-weight:400;color:#1f1f1f;letter-spacing:0.000px;transform:scaleX(1.0587);transform-origin:0 0;">Universal</span>
<svg style="left:518.3px;top:485.68px" width="14" height="14" viewBox="0 0 14 14" ><g fill="none" stroke="#4862c6" stroke-width="1.15" stroke-linejoin="round" stroke-linecap="round"><path d="M1.5 9.8 H12.8 V13.6 H1.8 C0.4 13.6 0.2 11.8 0.6 11.2 C1 10.5 1.2 9.8 1.5 9.8Z"/><path d="M4.6 9.6 C3 8.4 2.6 6.5 2.6 4.8 C2.6 3.5 3.2 1.5 4.2 1.4 C5 1.3 7 3.6 7.8 4.6 L6.4 6.2 C7.2 7.6 8.2 8.4 9.8 9.6"/><path d="M7.2 4.2 C7.6 2.4 9.5 0.8 12 0.6 V9.6"/></g></svg>
<span class="t" style="left:617.97px;top:490.45px;font-size:11.5px;font-weight:400;color:#1f1f1f;letter-spacing:0.000px;transform:scaleX(1.0926);transform-origin:0 0;">ocp-qa</span>
<span class="t" style="left:691.74px;top:490.45px;font-size:11.5px;font-weight:400;color:#1f1f1f;letter-spacing:0.000px;transform:scaleX(1.1128);transform-origin:0 0;">lka</span>
<span class="t" style="left:796.68px;top:490.45px;font-size:11.5px;font-weight:400;color:#1f1f1f;letter-spacing:0.000px;">0:22.020</span>
<div class="a" style="left:112.5px;top:517.05px;width:733px;height:44.97px;background:#f5f5f5"></div>
<svg style="left:136.3px;top:534.65px" width="7" height="10" viewBox="0 0 7 10" ><path d="M1.2 1 L5.4 4.5 L1.2 8" fill="none" stroke="#444" stroke-width="1.5" stroke-linecap="round"/></svg>
<span class="t" style="left:183.83px;top:535.02px;font-size:11.5px;font-weight:400;color:#1f1f1f;letter-spacing:0.000px;transform:scaleX(1.0458);transform-origin:0 0;">00:36</span>
<svg style="left:247.6px;top:529.85px" width="12" height="14" viewBox="0 0 12 14" ><g fill="none" stroke="#3a3a3a" stroke-width="1.1"><rect x="0.6" y="4.6" width="10.3" height="8.6" rx="0.6"/><path d="M5.75 4.6V1.2"/></g><circle cx="5.75" cy="1.2" r="0.9" fill="#3a3a3a"/><rect x="3.3" y="7.2" width="1.2" height="1.2" fill="#3a3a3a"/><rect x="7" y="7.2" width="1.2" height="1.2" fill="#3a3a3a"/><path d="M3.6 10.6H7.9" stroke="#3a3a3a" stroke-width="1"/></svg>
<span class="t" style="left:318.86px;top:535.02px;font-size:11.5px;font-weight:400;color:#1f1f1f;letter-spacing:0.000px;transform:scaleX(1.0587);transform-origin:0 0;">Universal</span>
<svg style="left:518.3px;top:530.25px" width="14" height="14" viewBox="0 0 14 14" ><g fill="none" stroke="#4862c6" stroke-width="1.15" stroke-linejoin="round" stroke-linecap="round"><path d="M1.5 9.8 H12.8 V13.6 H1.8 C0.4 13.6 0.2 11.8 0.6 11.2 C1 10.5 1.2 9.8 1.5 9.8Z"/><path d="M4.6 9.6 C3 8.4 2.6 6.5 2.6 4.8 C2.6 3.5 3.2 1.5 4.2 1.4 C5 1.3 7 3.6 7.8 4.6 L6.4 6.2 C7.2 7.6 8.2 8.4 9.8 9.6"/><path d="M7.2 4.2 C7.6 2.4 9.5 0.8 12 0.6 V9.6"/></g></svg>
<span class="t" style="left:617.97px;top:535.02px;font-size:11.5px;font-weight:400;color:#1f1f1f;letter-spacing:0.000px;transform:scaleX(1.0926);transform-origin:0 0;">ocp-qa</span>
<span class="t" style="left:691.79px;top:535.02px;font-size:11.5px;font-weight:400;color:#1f1f1f;letter-spacing:0.000px;transform:scaleX(1.0665);transform-origin:0 0;">reask</span>
<span class="t" style="left:796.81px;top:535.02px;font-size:11.5px;font-weight:400;color:#1f1f1f;letter-spacing:0.000px;">0:01.437</span>
<div class="a" style="left:112.5px;top:561.62px;width:733px;height:44.97px;background:#fff"></div>
<svg style="left:136.3px;top:579.22px" width="7" height="10" viewBox="0 0 7 10" ><path d="M1.2 1 L5.4 4.5 L1.2 8" fill="none" stroke="#444" stroke-width="1.5" stroke-linecap="round"/></svg>
<span class="t" style="left:183.83px;top:579.59px;font-size:11.5px;font-weight:400;color:#1f1f1f;letter-spacing:0.000px;transform:scaleX(1.0458);transform-origin:0 0;">00:36</span>
<svg style="left:247.6px;top:574.42px" width="12" height="14" viewBox="0 0 12 14" ><g fill="none" stroke="#3a3a3a" stroke-width="1.1"><rect x="0.6" y="4.6" width="10.3" height="8.6" rx="0.6"/><path d="M5.75 4.6V1.2"/></g><circle cx="5.75" cy="1.2" r="0.9" fill="#3a3a3a"/><rect x="3.3" y="7.2" width="1.2" height="1.2" fill="#3a3a3a"/><rect x="7" y="7.2" width="1.2" height="1.2" fill="#3a3a3a"/><path d="M3.6 10.6H7.9" stroke="#3a3a3a" stroke-width="1"/></svg>
<span class="t" style="left:318.88px;top:579.59px;font-size:11.5px;font-weight:400;color:#1f1f1f;letter-spacing:0.000px;transform:scaleX(1.0411);transform-origin:0 0;">Universal2Plus</span>
<svg style="left:518.3px;top:574.82px" width="14" height="14" viewBox="0 0 14 14" ><g fill="none" stroke="#4862c6" stroke-width="1.15" stroke-linejoin="round" stroke-linecap="round"><path d="M1.5 9.8 H12.8 V13.6 H1.8 C0.4 13.6 0.2 11.8 0.6 11.2 C1 10.5 1.2 9.8 1.5 9.8Z"/><path d="M4.6 9.6 C3 8.4 2.6 6.5 2.6 4.8 C2.6 3.5 3.2 1.5 4.2 1.4 C5 1.3 7 3.6 7.8 4.6 L6.4 6.2 C7.2 7.6 8.2 8.4 9.8 9.6"/><path d="M7.2 4.2 C7.6 2.4 9.5 0.8 12 0.6 V9.6"/></g></svg>
<span class="t" style="left:617.97px;top:579.59px;font-size:11.5px;font-weight:400;color:#1f1f1f;letter-spacing:0.000px;transform:scaleX(1.0926);transform-origin:0 0;">ocp-qa</span>
<span class="t" style="left:691.74px;top:579.59px;font-size:11.5px;font-weight:400;color:#1f1f1f;letter-spacing:0.000px;transform:scaleX(1.1128);transform-origin:0 0;">lka</span>
<span class="t" style="left:793.52px;top:579.59px;font-size:11.5px;font-weight:400;color:#1f1f1f;letter-spacing:0.000px;transform:scaleX(1.0728);transform-origin:0 0;">0:00.846</span>
<div class="a" style="left:112.5px;top:606.19px;width:733px;height:44.97px;background:#f5f5f5"></div>
<svg style="left:136.3px;top:623.79px" width="7" height="10" viewBox="0 0 7 10" ><path d="M1.2 1 L5.4 4.5 L1.2 8" fill="none" stroke="#444" stroke-width="1.5" stroke-linecap="round"/></svg>
<span class="t" style="left:183.83px;top:624.16px;font-size:11.5px;font-weight:400;color:#1f1f1f;letter-spacing:0.000px;transform:scaleX(1.0449);transform-origin:0 0;">00:35</span>
<svg style="left:247.6px;top:618.99px" width="12" height="14" viewBox="0 0 12 14" ><g fill="none" stroke="#3a3a3a" stroke-width="1.1"><rect x="0.6" y="4.6" width="10.3" height="8.6" rx="0.6"/><path d="M5.75 4.6V1.2"/></g><circle cx="5.75" cy="1.2" r="0.9" fill="#3a3a3a"/><rect x="3.3" y="7.2" width="1.2" height="1.2" fill="#3a3a3a"/><rect x="7" y="7.2" width="1.2" height="1.2" fill="#3a3a3a"/><path d="M3.6 10.6H7.9" stroke="#3a3a3a" stroke-width="1"/></svg>
<span class="t" style="left:318.86px;top:624.16px;font-size:11.5px;font-weight:400;color:#1f1f1f;letter-spacing:0.000px;transform:scaleX(1.0587);transform-origin:0 0;">Universal</span>
<svg style="left:518.3px;top:619.39px" width="14" height="14" viewBox="0 0 14 14" ><g fill="none" stroke="#4862c6" stroke-width="1.15" stroke-linejoin="round" stroke-linecap="round"><path d="M1.5 9.8 H12.8 V13.6 H1.8 C0.4 13.6 0.2 11.8 0.6 11.2 C1 10.5 1.2 9.8 1.5 9.8Z"/><path d="M4.6 9.6 C3 8.4 2.6 6.5 2.6 4.8 C2.6 3.5 3.2 1.5 4.2 1.4 C5 1.3 7 3.6 7.8 4.6 L6.4 6.2 C7.2 7.6 8.2 8.4 9.8 9.6"/><path d="M7.2 4.2 C7.6 2.4 9.5 0.8 12 0.6 V9.6"/></g></svg>
<span class="t" style="left:617.97px;top:624.16px;font-size:11.5px;font-weight:400;color:#1f1f1f;letter-spacing:0.000px;transform:scaleX(1.0926);transform-origin:0 0;">ocp-qa</span>
<span class="t" style="left:691.74px;top:624.16px;font-size:11.5px;font-weight:400;color:#1f1f1f;letter-spacing:0.000px;transform:scaleX(1.1128);transform-origin:0 0;">lka</span>
<span class="t" style="left:796.81px;top:624.16px;font-size:11.5px;font-weight:400;color:#1f1f1f;letter-spacing:0.000px;">0:02.777</span>
<div class="a" style="left:112.5px;top:650.76px;width:733px;height:44.97px;background:#fff"></div>
<svg style="left:136.3px;top:668.36px" width="7" height="10" viewBox="0 0 7 10" ><path d="M1.2 1 L5.4 4.5 L1.2 8" fill="none" stroke="#444" stroke-width="1.5" stroke-linecap="round"/></svg>
<span class="t" style="left:183.83px;top:668.73px;font-size:11.5px;font-weight:400;color:#1f1f1f;letter-spacing:0.000px;transform:scaleX(1.0449);transform-origin:0 0;">00:35</span>
<svg style="left:247.6px;top:663.56px" width="12" height="14" viewBox="0 0 12 14" ><g fill="none" stroke="#3a3a3a" stroke-width="1.1"><rect x="0.6" y="4.6" width="10.3" height="8.6" rx="0.6"/><path d="M5.75 4.6V1.2"/></g><circle cx="5.75" cy="1.2" r="0.9" fill="#3a3a3a"/><rect x="3.3" y="7.2" width="1.2" height="1.2" fill="#3a3a3a"/><rect x="7" y="7.2" width="1.2" height="1.2" fill="#3a3a3a"/><path d="M3.6 10.6H7.9" stroke="#3a3a3a" stroke-width="1"/></svg>
<span class="t" style="left:318.86px;top:668.73px;font-size:11.5px;font-weight:400;color:#1f1f1f;letter-spacing:0.000px;transform:scaleX(1.0587);transform-origin:0 0;">Universal</span>
<svg style="left:518.3px;top:663.96px" width="14" height="14" viewBox="0 0 14 14" ><g fill="none" stroke="#4862c6" stroke-width="1.15" stroke-linejoin="round" stroke-linecap="round"><path d="M1.5 9.8 H12.8 V13.6 H1.8 C0.4 13.6 0.2 11.8 0.6 11.2 C1 10.5 1.2 9.8 1.5 9.8Z"/><path d="M4.6 9.6 C3 8.4 2.6 6.5 2.6 4.8 C2.6 3.5 3.2 1.5 4.2 1.4 C5 1.3 7 3.6 7.8 4.6 L6.4 6.2 C7.2 7.6 8.2 8.4 9.8 9.6"/><path d="M7.2 4.2 C7.6 2.4 9.5 0.8 12 0.6 V9.6"/></g></svg>
<span class="t" style="left:617.97px;top:668.73px;font-size:11.5px;font-weight:400;color:#1f1f1f;letter-spacing:0.000px;transform:scaleX(1.0926);transform-origin:0 0;">ocp-qa</span>
<span class="t" style="left:691.74px;top:668.73px;font-size:11.5px;font-weight:400;color:#1f1f1f;letter-spacing:0.000px;transform:scaleX(1.1128);transform-origin:0 0;">lka</span>
<span class="t" style="left:796.81px;top:668.73px;font-size:11.5px;font-weight:400;color:#1f1f1f;letter-spacing:0.000px;">0:02.667</span>
<div class="a" style="left:112.5px;top:695.33px;width:733px;height:44.97px;background:#f5f5f5"></div>
<svg style="left:136.3px;top:712.93px" width="7" height="10" viewBox="0 0 7 10" ><path d="M1.2 1 L5.4 4.5 L1.2 8" fill="none" stroke="#444" stroke-width="1.5" stroke-linecap="round"/></svg>
<span class="t" style="left:183.83px;top:713.30px;font-size:11.5px;font-weight:400;color:#1f1f1f;letter-spacing:0.000px;transform:scaleX(1.0449);transform-origin:0 0;">00:35</span>
<svg style="left:247.6px;top:708.13px" width="12" height="14" viewBox="0 0 12 14" ><g fill="none" stroke="#3a3a3a" stroke-width="1.1"><rect x="0.6" y="4.6" width="10.3" height="8.6" rx="0.6"/><path d="M5.75 4.6V1.2"/></g><circle cx="5.75" cy="1.2" r="0.9" fill="#3a3a3a"/><rect x="3.3" y="7.2" width="1.2" height="1.2" fill="#3a3a3a"/><rect x="7" y="7.2" width="1.2" height="1.2" fill="#3a3a3a"/><path d="M3.6 10.6H7.9" stroke="#3a3a3a" stroke-width="1"/></svg>
<span class="t" style="left:318.86px;top:713.30px;font-size:11.5px;font-weight:400;color:#1f1f1f;letter-spacing:0.000px;transform:scaleX(1.0587);transform-origin:0 0;">Universal</span>
<svg style="left:518.3px;top:708.53px" width="14" height="14" viewBox="0 0 14 14" ><g fill="none" stroke="#4862c6" stroke-width="1.15" stroke-linejoin="round" stroke-linecap="round"><path d="M1.5 9.8 H12.8 V13.6 H1.8 C0.4 13.6 0.2 11.8 0.6 11.2 C1 10.5 1.2 9.8 1.5 9.8Z"/><path d="M4.6 9.6 C3 8.4 2.6 6.5 2.6 4.8 C2.6 3.5 3.2 1.5 4.2 1.4 C5 1.3 7 3.6 7.8 4.6 L6.4 6.2 C7.2 7.6 8.2 8.4 9.8 9.6"/><path d="M7.2 4.2 C7.6 2.4 9.5 0.8 12 0.6 V9.6"/></g></svg>
<span class="t" style="left:617.97px;top:713.30px;font-size:11.5px;font-weight:400;color:#1f1f1f;letter-spacing:0.000px;transform:scaleX(1.0926);transform-origin:0 0;">ocp-qa</span>
<span class="t" style="left:691.74px;top:713.30px;font-size:11.5px;font-weight:400;color:#1f1f1f;letter-spacing:0.000px;transform:scaleX(1.1128);transform-origin:0 0;">lka</span>
<span class="t" style="left:796.81px;top:713.30px;font-size:11.5px;font-weight:400;color:#1f1f1f;letter-spacing:0.000px;">0:02.467</span>
<div class="a" style="left:112.5px;top:739.9px;width:733px;height:44.97px;background:#fff"></div>
<svg style="left:136.3px;top:757.5px" width="7" height="10" viewBox="0 0 7 10" ><path d="M1.2 1 L5.4 4.5 L1.2 8" fill="none" stroke="#444" stroke-width="1.5" stroke-linecap="round"/></svg>
<span class="t" style="left:183.83px;top:757.87px;font-size:11.5px;font-weight:400;color:#1f1f1f;letter-spacing:0.000px;transform:scaleX(1.0449);transform-origin:0 0;">00:35</span>
<svg style="left:247.6px;top:752.7px" width="12" height="14" viewBox="0 0 12 14" ><g fill="none" stroke="#3a3a3a" stroke-width="1.1"><rect x="0.6" y="4.6" width="10.3" height="8.6" rx="0.6"/><path d="M5.75 4.6V1.2"/></g><circle cx="5.75" cy="1.2" r="0.9" fill="#3a3a3a"/><rect x="3.3" y="7.2" width="1.2" height="1.2" fill="#3a3a3a"/><rect x="7" y="7.2" width="1.2" height="1.2" fill="#3a3a3a"/><path d="M3.6 10.6H7.9" stroke="#3a3a3a" stroke-width="1"/></svg>
<span class="t" style="left:318.86px;top:757.87px;font-size:11.5px;font-weight:400;color:#1f1f1f;letter-spacing:0.000px;transform:scaleX(1.0587);transform-origin:0 0;">Universal</span>
<svg style="left:518.3px;top:753.1px" width="14" height="14" viewBox="0 0 14 14" ><g fill="none" stroke="#4862c6" stroke-width="1.15" stroke-linejoin="round" stroke-linecap="round"><path d="M1.5 9.8 H12.8 V13.6 H1.8 C0.4 13.6 0.2 11.8 0.6 11.2 C1 10.5 1.2 9.8 1.5 9.8Z"/><path d="M4.6 9.6 C3 8.4 2.6 6.5 2.6 4.8 C2.6 3.5 3.2 1.5 4.2 1.4 C5 1.3 7 3.6 7.8 4.6 L6.4 6.2 C7.2 7.6 8.2 8.4 9.8 9.6"/><path d="M7.2 4.2 C7.6 2.4 9.5 0.8 12 0.6 V9.6"/></g></svg>
<span class="t" style="left:617.97px;top:757.87px;font-size:11.5px;font-weight:400;color:#1f1f1f;letter-spacing:0.000px;transform:scaleX(1.0926);transform-origin:0 0;">ocp-qa</span>
<span class="t" style="left:691.74px;top:757.87px;font-size:11.5px;font-weight:400;color:#1f1f1f;letter-spacing:0.000px;transform:scaleX(1.1128);transform-origin:0 0;">lka</span>
<span class="t" style="left:796.80px;top:757.87px;font-size:11.5px;font-weight:400;color:#1f1f1f;letter-spacing:0.000px;">0:01.571</span>
<div class="a" style="left:112.5px;top:784.47px;width:733px;height:44.97px;background:#f5f5f5"></div>
<svg style="left:136.3px;top:802.07px" width="7" height="10" viewBox="0 0 7 10" ><path d="M1.2 1 L5.4 4.5 L1.2 8" fill="none" stroke="#444" stroke-width="1.5" stroke-linecap="round"/></svg>
<span class="t" style="left:183.83px;top:802.44px;font-size:11.5px;font-weight:400;color:#1f1f1f;letter-spacing:0.000px;transform:scaleX(1.0449);transform-origin:0 0;">00:35</span>
<svg style="left:247.6px;top:797.27px" width="12" height="14" viewBox="0 0 12 14" ><g fill="none" stroke="#3a3a3a" stroke-width="1.1"><rect x="0.6" y="4.6" width="10.3" height="8.6" rx="0.6"/><path d="M5.75 4.6V1.2"/></g><circle cx="5.75" cy="1.2" r="0.9" fill="#3a3a3a"/><rect x="3.3" y="7.2" width="1.2" height="1.2" fill="#3a3a3a"/><rect x="7" y="7.2" width="1.2" height="1.2" fill="#3a3a3a"/><path d="M3.6 10.6H7.9" stroke="#3a3a3a" stroke-width="1"/></svg>
<span class="t" style="left:318.86px;top:802.44px;font-size:11.5px;font-weight:400;color:#1f1f1f;letter-spacing:0.000px;transform:scaleX(1.0587);transform-origin:0 0;">Universal</span>
<svg style="left:518.3px;top:797.67px" width="14" height="14" viewBox="0 0 14 14" ><g fill="none" stroke="#4862c6" stroke-width="1.15" stroke-linejoin="round" stroke-linecap="round"><path d="M1.5 9.8 H12.8 V13.6 H1.8 C0.4 13.6 0.2 11.8 0.6 11.2 C1 10.5 1.2 9.8 1.5 9.8Z"/><path d="M4.6 9.6 C3 8.4 2.6 6.5 2.6 4.8 C2.6 3.5 3.2 1.5 4.2 1.4 C5 1.3 7 3.6 7.8 4.6 L6.4 6.2 C7.2 7.6 8.2 8.4 9.8 9.6"/><path d="M7.2 4.2 C7.6 2.4 9.5 0.8 12 0.6 V9.6"/></g></svg>
<span class="t" style="left:617.97px;top:802.44px;font-size:11.5px;font-weight:400;color:#1f1f1f;letter-spacing:0.000px;transform:scaleX(1.0926);transform-origin:0 0;">ocp-qa</span>
<span class="t" style="left:691.74px;top:802.44px;font-size:11.5px;font-weight:400;color:#1f1f1f;letter-spacing:0.000px;transform:scaleX(1.1128);transform-origin:0 0;">lka</span>
<span class="t" style="left:797.66px;top:802.44px;font-size:11.5px;font-weight:400;color:#1f1f1f;letter-spacing:0.000px;">0:02.117</span>
<div class="a" style="left:112.5px;top:829.04px;width:733px;height:44.57px;background:#fff"></div>
<svg style="left:136.3px;top:846.64px" width="7" height="10" viewBox="0 0 7 10" ><path d="M1.2 1 L5.4 4.5 L1.2 8" fill="none" stroke="#444" stroke-width="1.5" stroke-linecap="round"/></svg>
<span class="t" style="left:183.83px;top:847.01px;font-size:11.5px;font-weight:400;color:#1f1f1f;letter-spacing:0.000px;transform:scaleX(1.0449);transform-origin:0 0;">00:35</span>
<svg style="left:247.6px;top:841.84px" width="12" height="14" viewBox="0 0 12 14" ><g fill="none" stroke="#3a3a3a" stroke-width="1.1"><rect x="0.6" y="4.6" width="10.3" height="8.6" rx="0.6"/><path d="M5.75 4.6V1.2"/></g><circle cx="5.75" cy="1.2" r="0.9" fill="#3a3a3a"/><rect x="3.3" y="7.2" width="1.2" height="1.2" fill="#3a3a3a"/><rect x="7" y="7.2" width="1.2" height="1.2" fill="#3a3a3a"/><path d="M3.6 10.6H7.9" stroke="#3a3a3a" stroke-width="1"/></svg>
<span class="t" style="left:318.86px;top:847.01px;font-size:11.5px;font-weight:400;color:#1f1f1f;letter-spacing:0.000px;transform:scaleX(1.0587);transform-origin:0 0;">Universal</span>
<svg style="left:518.3px;top:842.24px" width="14" height="14" viewBox="0 0 14 14" ><g fill="none" stroke="#4862c6" stroke-width="1.15" stroke-linejoin="round" stroke-linecap="round"><path d="M1.5 9.8 H12.8 V13.6 H1.8 C0.4 13.6 0.2 11.8 0.6 11.2 C1 10.5 1.2 9.8 1.5 9.8Z"/><path d="M4.6 9.6 C3 8.4 2.6 6.5 2.6 4.8 C2.6 3.5 3.2 1.5 4.2 1.4 C5 1.3 7 3.6 7.8 4.6 L6.4 6.2 C7.2 7.6 8.2 8.4 9.8 9.6"/><path d="M7.2 4.2 C7.6 2.4 9.5 0.8 12 0.6 V9.6"/></g></svg>
<span class="t" style="left:617.97px;top:847.01px;font-size:11.5px;font-weight:400;color:#1f1f1f;letter-spacing:0.000px;transform:scaleX(1.0926);transform-origin:0 0;">ocp-qa</span>
<span class="t" style="left:691.74px;top:847.01px;font-size:11.5px;font-weight:400;color:#1f1f1f;letter-spacing:0.000px;transform:scaleX(1.1128);transform-origin:0 0;">lka</span>
<span class="t" style="left:796.74px;top:847.01px;font-size:11.5px;font-weight:400;color:#1f1f1f;letter-spacing:0.000px;">0:01.586</span>
<div class="a" style="left:111.5px;top:874px;width:735px;height:5px;background:#f3f3f3;border-radius:0 0 6px 6px;border:1px solid #ececec;border-top:none"></div>
<div class="a" style="left:864px;top:251px;width:6px;height:679px;background:#f7f7f7;border-left:1px solid #e6e6e6;border-right:1px solid #e6e6e6"></div>
<div class="a" style="left:111.6px;top:896.4px;width:85px;height:30.4px;border:1px solid #e3e3e3;border-radius:4px;background:#fff"></div>
<span class="t" style="left:126.23px;top:905.20px;font-size:13px;font-weight:400;color:#a9a9a9;letter-spacing:0.000px;transform:scaleX(1.0950);transform-origin:0 0;-webkit-text-stroke:0.2px #a9a9a9">Previous</span>
<span class="t" style="left:439.83px;top:900.80px;font-size:13px;font-weight:400;color:#1f1f1f;letter-spacing:0.000px;transform:scaleX(1.0937);transform-origin:0 0;">50 / page</span>
<svg style="left:511.5px;top:904px" width="12" height="8" viewBox="0 0 12 8" ><path d="M1 1.2 L5.5 5.8 L10 1.2" fill="none" stroke="#333" stroke-width="1.4"/></svg>
<div class="a" style="left:440px;top:922.5px;width:90.5px;height:2px;background:#dcdcdc"></div>
<div class="a" style="left:774.4px;top:896.7px;width:72.4px;height:29.8px;border:1px solid #5a97f2;border-radius:4px;background:#fff;box-shadow:0 1px 2px rgba(0,0,0,.08)"></div>
<span class="t" style="left:795.12px;top:905.20px;font-size:13px;font-weight:400;color:#1a6be8;letter-spacing:0.000px;transform:scaleX(1.1066);transform-origin:0 0;-webkit-text-stroke:0.3px #1a6be8">Next</span>
<div class="a" style="left:888px;top:251px;width:602.5px;height:51.5px;background:#f4f4f4;border:1px solid #e8e8e8;border-radius:7px"></div>
<div class="a" style="left:903.2px;top:269px;width:14.6px;height:15.5px;border:1px solid #7a7a7a;border-radius:3px"></div>
<svg style="left:905.5px;top:271.8px" width="10" height="10" viewBox="0 0 10 10" ><path d="M5 1.2V8.8M1.2 5H8.8" stroke="#444" stroke-width="1.05"/></svg>
<span class="t" style="left:927.13px;top:269.78px;font-size:14.2px;font-weight:400;color:#1a1a1a;letter-spacing:0.000px;transform:scaleX(1.0872);transform-origin:0 0;-webkit-text-stroke:0.5px #1a1a1a">Dialog Review</span>
<div class="a" style="left:1335.3px;top:265px;width:106px;height:23.4px;border:1px solid #5a97f2;border-radius:4px;background:#fff;box-shadow:0 1px 2px rgba(0,0,0,.08)"></div>
<svg style="left:1346px;top:270px" width="12" height="13" viewBox="0 0 12 13" ><g fill="none" stroke="#1a6be8" stroke-width="1.1"><circle cx="2.2" cy="2" r="1.5"/><path d="M2.2 3.5V10.5H6.5M2.2 6.3H6.5"/><rect x="6.8" y="5" width="4.4" height="2.6" rx="1.3"/><rect x="6.8" y="9.2" width="4.4" height="2.6" rx="1.3"/></g></svg>
<span class="t" style="left:1363.48px;top:271.42px;font-size:12.5px;font-weight:400;color:#1a6be8;letter-spacing:0.000px;transform:scaleX(0.9911);transform-origin:0 0;-webkit-text-stroke:0.3px #1a6be8">Dialog Tree</span>
<div class="a" style="left:1460.3px;top:268.9px;width:3.3px;height:3.3px;border-radius:50%;background:#444"></div>
<div class="a" style="left:1460.3px;top:275.4px;width:3.3px;height:3.3px;border-radius:50%;background:#444"></div>
<div class="a" style="left:1460.3px;top:281.9px;width:3.3px;height:3.3px;border-radius:50%;background:#444"></div>
<span class="t" style="left:886.32px;top:321.18px;font-size:11.6px;font-weight:400;color:#333;letter-spacing:0.000px;">1</span>
<div class="a" style="left:887.6px;top:340.5px;width:21px;height:21.3px;border-left:1px solid #dedede;border-bottom:1px solid #dedede;border-bottom-left-radius:20px"></div>
<div class="a" style="left:902.6px;top:317.50px;width:26.8px;height:26.8px;border-radius:50%;background:#f2f2f2"></div>
<svg style="left:910px;top:322.9px" width="12" height="14" viewBox="0 0 12 14" ><g fill="none" stroke="#333" stroke-width="1.2"><rect x="0.6" y="4.6" width="10.8" height="9" rx="0.6"/><path d="M6 4.6V1.4"/></g><circle cx="6" cy="1.3" r="1" fill="#333"/><rect x="3.4" y="7.4" width="1.3" height="1.3" fill="#333"/><rect x="7.3" y="7.4" width="1.3" height="1.3" fill="#333"/><path d="M3.8 11H8.2" stroke="#333" stroke-width="1.1"/></svg>
<div class="a" style="left:938.6px;top:317.3px;width:90px;height:37.0px;background:#efefef;border-radius:2px 0 0 17px"></div>
<span class="t" style="left:956.02px;top:328.88px;font-size:12.9px;font-weight:400;color:#222;letter-spacing:0.000px;transform:scaleX(1.1169);transform-origin:0 0;">How can I help you?</span>
<span class="t" style="left:885.92px;top:389.18px;font-size:11.6px;font-weight:400;color:#333;letter-spacing:0.000px;">2</span>
<div class="a" style="left:887.6px;top:407.6px;width:21px;height:60.5px;border-left:1px solid #dedede;border-bottom:1px solid #dedede;border-bottom-left-radius:20px"></div>
<div class="a" style="left:902.6px;top:423.40px;width:26.8px;height:26.8px;border-radius:50%;background:#f2f2f2"></div>
<svg style="left:910px;top:428.8px" width="12" height="14" viewBox="0 0 12 14" ><g fill="none" stroke="#333" stroke-width="1.2"><rect x="0.6" y="4.6" width="10.8" height="9" rx="0.6"/><path d="M6 4.6V1.4"/></g><circle cx="6" cy="1.3" r="1" fill="#333"/><rect x="3.4" y="7.4" width="1.3" height="1.3" fill="#333"/><rect x="7.3" y="7.4" width="1.3" height="1.3" fill="#333"/><path d="M3.8 11H8.2" stroke="#333" stroke-width="1.1"/></svg>
<div class="a" style="left:938.6px;top:423.5px;width:90px;height:36.2px;background:#efefef;border-radius:2px 0 0 17px"></div>
<span class="t" style="left:956.08px;top:434.78px;font-size:12.9px;font-weight:400;color:#222;letter-spacing:0.000px;transform:scaleX(1.0610);transform-origin:0 0;">Please tell me your account</span>
<span class="t" style="left:886.06px;top:495.38px;font-size:11.6px;font-weight:400;color:#333;letter-spacing:0.000px;">3</span>
<div class="a" style="left:887.6px;top:514.0px;width:21px;height:59.7px;border-left:1px solid #dedede;border-bottom:1px solid #dedede;border-bottom-left-radius:20px"></div>
<div class="a" style="left:902.6px;top:529.20px;width:26.8px;height:26.8px;border-radius:50%;background:#f2f2f2"></div>
<svg style="left:910px;top:534.6px" width="12" height="14" viewBox="0 0 12 14" ><g fill="none" stroke="#333" stroke-width="1.2"><rect x="0.6" y="4.6" width="10.8" height="9" rx="0.6"/><path d="M6 4.6V1.4"/></g><circle cx="6" cy="1.3" r="1" fill="#333"/><rect x="3.4" y="7.4" width="1.3" height="1.3" fill="#333"/><rect x="7.3" y="7.4" width="1.3" height="1.3" fill="#333"/><path d="M3.8 11H8.2" stroke="#333" stroke-width="1.1"/></svg>
<div class="a" style="left:938.6px;top:528.8px;width:90px;height:37.0px;background:#efefef;border-radius:2px 0 0 17px"></div>
<span class="t" style="left:956.07px;top:540.78px;font-size:12.9px;font-weight:400;color:#222;letter-spacing:0.000px;transform:scaleX(1.1038);transform-origin:0 0;">your balance is</span>
<span class="t" style="left:886.23px;top:598.78px;font-size:11.6px;font-weight:400;color:#333;letter-spacing:0.000px;">4</span>
<div class="a" style="left:887.6px;top:618.5px;width:21px;height:16.3px;border-left:1px solid #dedede;border-bottom:1px solid #dedede;border-bottom-left-radius:15.799999999999955px"></div>
<svg style="left:1315px;top:394.3px" width="10" height="7" viewBox="0 0 10 7" ><path d="M1 1.2 L5 5.2 L9 1.2" fill="none" stroke="#444" stroke-width="1.4"/></svg>
<svg style="left:1340px;top:393.1px" width="12" height="11" viewBox="0 0 12 11" ><path d="M1.2 3.2 H11.2 M0 7.4 H10.2 M4.6 0.2 L2.6 10.2 M9 0.2 L7 10.2" stroke="#555" stroke-width="1.15" fill="none"/></svg>
<div class="a" style="left:1361.4px;top:383.0px;width:85.59999999999991px;height:32.3px;background:#e4effd;border-radius:17px 0 17px 17px"></div>
<span class="t" style="left:1379.18px;top:392.70px;font-size:13px;font-weight:400;color:#1f1f1f;letter-spacing:0.000px;transform:scaleX(1.0967);transform-origin:0 0;">balance</span>
<div class="a" style="left:1455.9px;top:378.10px;width:27px;height:27px;border-radius:50%;background:#e4effd"></div>
<svg style="left:1461.4px;top:383.6px" width="16" height="16" viewBox="0 0 16 16" ><circle cx="8" cy="4" r="2.9" fill="#4a5ea8"/><ellipse cx="8" cy="11.5" rx="5.8" ry="3" fill="#4a5ea8"/></svg>
<span class="t" style="left:1455.77px;top:410.54px;font-size:10.7px;font-weight:400;color:#555;letter-spacing:0.000px;transform:scaleX(1.0363);transform-origin:0 0;">00:43</span>
<svg style="left:1331px;top:500.5px" width="10" height="7" viewBox="0 0 10 7" ><path d="M1 1.2 L5 5.2 L9 1.2" fill="none" stroke="#444" stroke-width="1.4"/></svg>
<svg style="left:1355.8px;top:498.8px" width="12" height="11" viewBox="0 0 12 11" ><path d="M1.2 3.2 H11.2 M0 7.4 H10.2 M4.6 0.2 L2.6 10.2 M9 0.2 L7 10.2" stroke="#555" stroke-width="1.15" fill="none"/></svg>
<div class="a" style="left:1377.0px;top:489.0px;width:70.0px;height:32.8px;background:#e4effd;border-radius:17px 0 17px 17px"></div>
<span class="t" style="left:1394.14px;top:499.00px;font-size:13px;font-weight:400;color:#1f1f1f;letter-spacing:0.000px;transform:scaleX(0.9648);transform-origin:0 0;">12345</span>
<div class="a" style="left:1455.9px;top:484.50px;width:27px;height:27px;border-radius:50%;background:#e4effd"></div>
<svg style="left:1461.4px;top:490.0px" width="16" height="16" viewBox="0 0 16 16" ><circle cx="8" cy="4" r="2.9" fill="#4a5ea8"/><ellipse cx="8" cy="11.5" rx="5.8" ry="3" fill="#4a5ea8"/></svg>
<span class="t" style="left:1455.77px;top:516.64px;font-size:10.7px;font-weight:400;color:#555;letter-spacing:0.000px;transform:scaleX(1.0363);transform-origin:0 0;">00:43</span>
<svg style="left:1331px;top:606.5px" width="10" height="7" viewBox="0 0 10 7" ><path d="M1 1.2 L5 5.2 L9 1.2" fill="none" stroke="#444" stroke-width="1.4"/></svg>
<svg style="left:1356.3px;top:605.0px" width="12" height="11" viewBox="0 0 12 11" ><path d="M1.2 3.2 H11.2 M0 7.4 H10.2 M4.6 0.2 L2.6 10.2 M9 0.2 L7 10.2" stroke="#555" stroke-width="1.15" fill="none"/></svg>
<div class="a" style="left:1377.5px;top:595.0px;width:69.5px;height:32.7px;background:#e4effd;border-radius:17px 0 17px 17px"></div>
<span class="t" style="left:1395.82px;top:605.70px;font-size:13px;font-weight:400;color:#1f1f1f;letter-spacing:0.000px;transform:scaleX(1.1674);transform-origin:0 0;">[hup]</span>
<div class="a" style="left:1455.9px;top:590.50px;width:27px;height:27px;border-radius:50%;background:#e4effd"></div>
<svg style="left:1461.4px;top:596.0px" width="16" height="16" viewBox="0 0 16 16" ><circle cx="8" cy="4" r="2.9" fill="#4a5ea8"/><ellipse cx="8" cy="11.5" rx="5.8" ry="3" fill="#4a5ea8"/></svg>
<span class="t" style="left:1455.77px;top:622.94px;font-size:10.7px;font-weight:400;color:#555;letter-spacing:0.000px;transform:scaleX(1.0363);transform-origin:0 0;">00:43</span>
<div class="a" style="left:1018px;top:218px;width:289px;height:453px;background:#fff;box-shadow:0 4px 14px rgba(0,0,0,.16)"></div>
<div class="a" style="left:1018px;top:218px;width:287.4px;height:44.5px;background:#f4f4f4;border-radius:0 3px 0 0"></div>
<div class="a" style="left:1305.4px;top:263px;width:2.5px;height:408px;background:#e2e2e2"></div>
<div class="a" style="left:1018px;top:666.5px;width:289px;height:5px;background:linear-gradient(#ececec,#dcdcdc);border-radius:0 0 0 4px"></div>
<span class="t" style="left:1039.19px;top:228.73px;font-size:11.3px;font-weight:400;color:#8a8a8a;letter-spacing:0.000px;transform:scaleX(1.0934);transform-origin:0 0;">Dialog ID:</span>
<span class="t" style="left:1039.76px;top:242.77px;font-size:11.5px;font-weight:400;color:#222;letter-spacing:0.000px;transform:scaleX(0.9762);transform-origin:0 0;">0721a84a0be2f275de292d1432a014cc1e...</span>
<svg style="left:1269.5px;top:235.8px" width="12" height="12" viewBox="0 0 12 12" ><path d="M0.8 0.8 L11.2 11.2 M11.2 0.8 L0.8 11.2" stroke="#555" stroke-width="1.5"/></svg>
<svg style="left:1048.7px;top:283px" width="6" height="4.5" viewBox="0 0 6 4.5" ><path d="M0 0 H6 L3 4.5Z" fill="#3d4a6e"/></svg>
<span class="t" style="left:1061.36px;top:280.04px;font-size:13.3px;font-weight:400;color:#1a1a1a;letter-spacing:0.000px;transform:scaleX(1.0561);transform-origin:0 0;-webkit-text-stroke:0.35px #1a1a1a">SND_dps_pdc_ocp_application</span>
<div class="a" style="left:1051px;top:309.3px;width:1px;height:128.7px;background:#e2e2e2"></div>
<div class="a" style="left:1051px;top:329.1px;width:18px;height:1px;background:#e2e2e2"></div>
<div class="a" style="left:1051px;top:357.5px;width:18px;height:1px;background:#e2e2e2"></div>
<div class="a" style="left:1051px;top:414.1px;width:18px;height:1px;background:#e2e2e2"></div>
<div class="a" style="left:1051px;top:442.0px;width:18px;height:1px;background:#e2e2e2"></div>
<svg style="left:1078px;top:353.8px" width="6" height="4.6" viewBox="0 0 6 4.6" ><path d="M0 0 H5.8 L2.9 4.6Z" fill="#3d4a6e"/></svg>
<div class="a" style="left:1079px;top:366px;width:1px;height:20.5px;background:#e2e2e2"></div>
<div class="a" style="left:1079px;top:386px;width:18.5px;height:1px;background:#e2e2e2"></div>
<span class="t" style="left:1077.49px;top:323.70px;font-size:13px;font-weight:400;color:#1f1f1f;letter-spacing:0.000px;transform:scaleX(1.1085);transform-origin:0 0;">dps_pdc_intent_app</span>
<span class="t" style="left:1089.77px;top:351.30px;font-size:13px;font-weight:400;color:#1a1a1a;letter-spacing:0.000px;transform:scaleX(1.0699);transform-origin:0 0;-webkit-text-stroke:0.35px #1a1a1a">SND_dps_pdc_flow_app</span>
<span class="t" style="left:1106.30px;top:379.90px;font-size:13px;font-weight:400;color:#1f1f1f;letter-spacing:0.000px;transform:scaleX(1.1000);transform-origin:0 0;">dps_pdc_numeric_app</span>
<span class="t" style="left:1077.38px;top:408.30px;font-size:13px;font-weight:400;color:#1f1f1f;letter-spacing:0.000px;transform:scaleX(1.0579);transform-origin:0 0;">SND_dps_pdc_flow_app</span>
<span class="t" style="left:1077.39px;top:436.30px;font-size:13px;font-weight:400;color:#1f1f1f;letter-spacing:0.000px;transform:scaleX(1.1091);transform-origin:0 0;">dps_pdc_announcement_app</span>
<svg style="left:1288px;top:650px" width="11" height="11" viewBox="0 0 11 11" ><path d="M1 10 L10 1 M6.5 10 L10 6.5" stroke="#666" stroke-width="0.9"/></svg>
<div class="a" style="left:1014.2px;top:214.2px;width:296.6px;height:460.6px;border:3.2px solid #e43a7c"></div>
<svg style="left:0px;top:0px" width="1512" height="945" viewBox="0 0 1512 945" ><path d="M1364.5 719 L1306 668" stroke="#e43a7c" stroke-width="4.2" stroke-linecap="butt"/><path d="M1298.6 661.5 L1318.5 660.2 L1301.2 681 Z" fill="#e43a7c" stroke="#e43a7c" stroke-width="2.5" stroke-linejoin="round"/></svg>
</body></html>
